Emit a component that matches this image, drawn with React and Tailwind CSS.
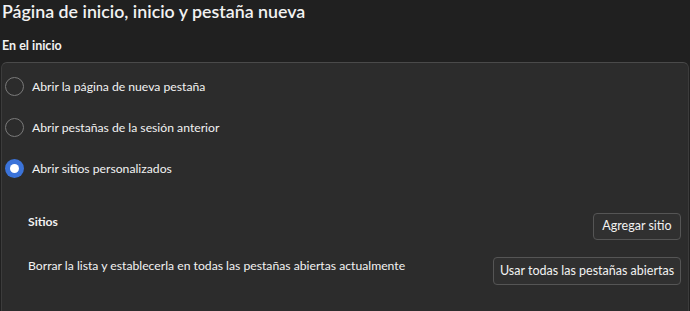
import React, { useState } from "react";

const opciones = [
  "Abrir la página de nueva pestaña",
  "Abrir pestañas de la sesión anterior",
  "Abrir sitios personalizados",
];

const Radio = ({ checked }) =>
  checked ? (
    <span className="flex h-[19px] w-[19px] items-center justify-center rounded-full bg-[#3b73d9]">
      <span className="h-[9px] w-[9px] rounded-full bg-white" />
    </span>
  ) : (
    <span className="h-[19px] w-[19px] rounded-full border border-[#7a7a7a]" />
  );

const App = () => {
  const [seleccion, setSeleccion] = useState(2);

  return (
    <div
      className="h-[311px] w-[690px] overflow-hidden bg-[#202020] pt-[1px] text-[#f2f2f2]"
      style={{ fontFamily: 'Lato, "Liberation Sans", sans-serif' }}
    >
      <h1 className="pl-[2px] text-[17.8px] leading-[20px] font-semibold whitespace-nowrap">
        Página de inicio, inicio y pestaña nueva
      </h1>
      <h2 className="mt-[16px] pl-[2px] text-[12.5px] leading-[18px] font-bold">En el inicio</h2>

      {/* Tarjeta de opciones */}
      <div className="mt-[7px] ml-[1px] h-[300px] w-[688px] rounded-[6px] border border-[#3c3c3c] border-t-[#4a4a4a] bg-[#2c2c2c] pt-[3px]">
        {opciones.map((texto, idx) => (
          <div
            key={idx}
            onClick={() => setSeleccion(idx)}
            className="flex h-[41px] cursor-pointer items-center gap-[8px] pl-[3px]"
          >
            <Radio checked={seleccion === idx} />
            <span className="text-[12.2px] leading-[18px]">{texto}</span>
          </div>
        ))}

        <div className="mt-[24px] flex items-center justify-between pr-[7px] pl-[26px]">
          <span className="pb-[9px] text-[12.2px] leading-[18px] font-bold">Sitios</span>
          <button className="h-[27px] w-[88px] rounded-[4px] border border-[#555] bg-[#303030] text-[12.5px] whitespace-nowrap text-[#f2f2f2]">
            Agregar sitio
          </button>
        </div>

        <div className="mt-[17px] flex items-center justify-between pr-[7px] pl-[26px]">
          <span className="pb-[10px] text-[12.2px] leading-[18px]">
            Borrar la lista y establecerla en todas las pestañas abiertas actualmente
          </span>
          <button className="h-[28px] w-[188px] rounded-[4px] border border-[#555] bg-[#303030] text-[12.5px] whitespace-nowrap text-[#f2f2f2]">
            Usar todas las pestañas abiertas
          </button>
        </div>
      </div>
    </div>
  );
};

export default App;
